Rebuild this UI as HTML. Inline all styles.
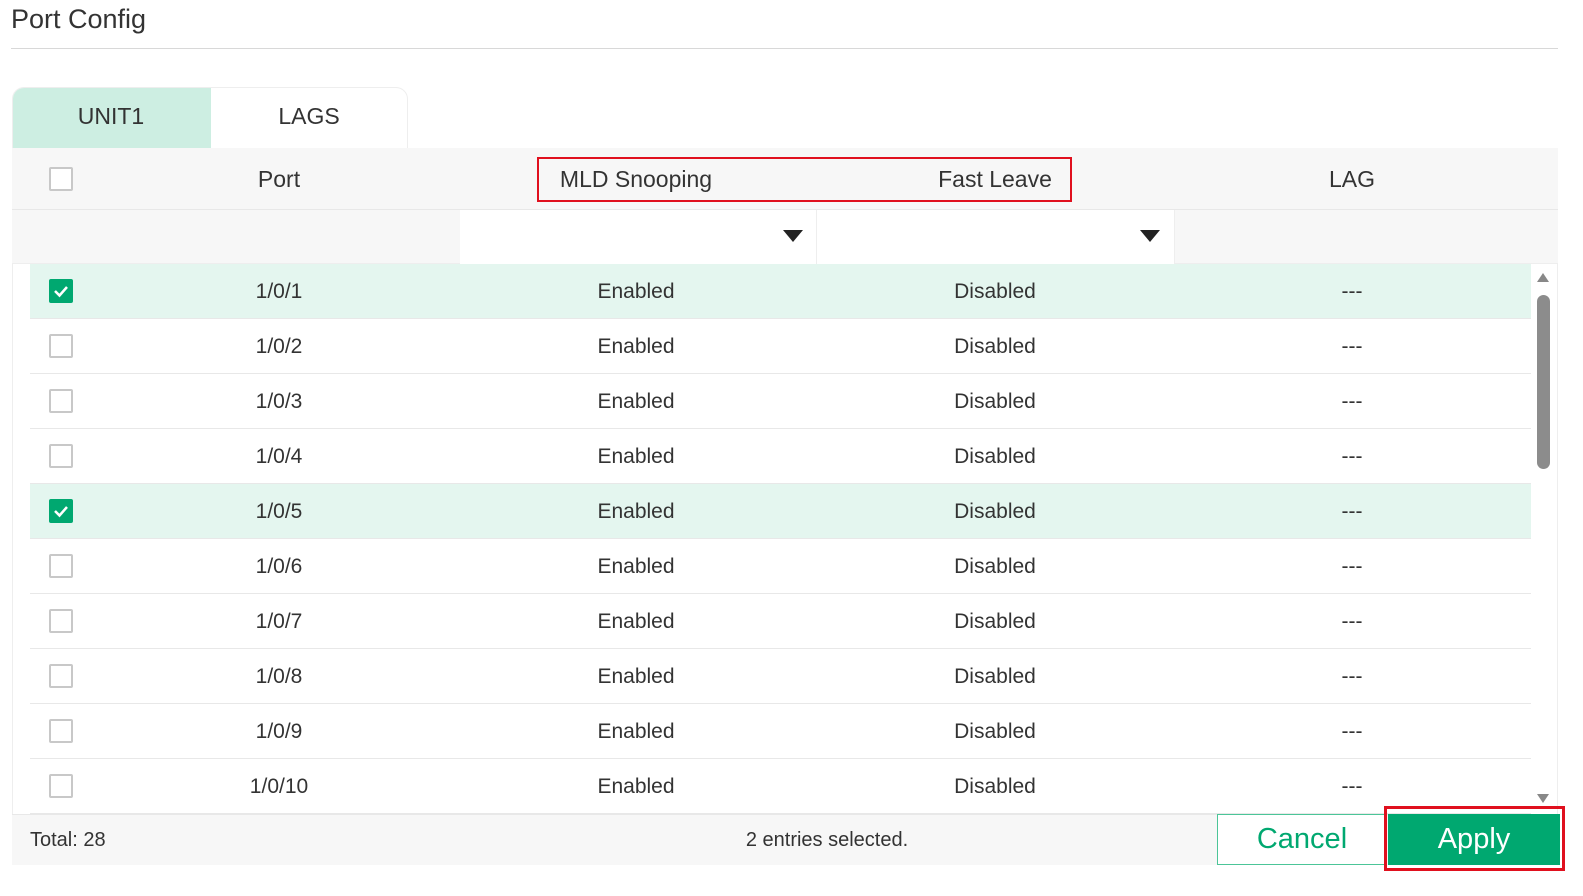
<!DOCTYPE html>
<html><head><style>
*{box-sizing:border-box;margin:0;padding:0}
body{width:1583px;height:896px;background:#fff;font-family:"Liberation Sans",sans-serif;color:#333;position:relative;overflow:hidden}
.a{position:absolute}
.t{position:absolute;transform:translateX(-50%);white-space:nowrap;font-size:21px;color:#333}
.cb{position:absolute;left:49px;width:24px;height:24px;border:2px solid #c8c8c8;background:#fff;border-radius:2px}
.cb.on{background:#00a870;border-color:#00a870}
.row{position:absolute;left:30px;width:1501px;height:55px;border-bottom:1px solid #e8e8e8}
</style></head><body>
<div class="a" style="left:11px;top:4px;font-size:27px;color:#333">Port Config</div>
<div class="a" style="left:11px;top:48px;width:1547px;height:1px;background:#d8d8d8"></div>
<div class="a" style="left:12px;top:87px;width:396px;height:61px;border:1px solid #eee;border-bottom:none;border-radius:12px 12px 0 0;background:#fff;overflow:hidden">
<div class="a" style="left:0;top:0;width:198px;height:61px;background:#cdeee2"></div></div>
<div class="t" style="left:111px;top:103px;font-size:23px">UNIT1</div>
<div class="t" style="left:309px;top:103px;font-size:23px">LAGS</div>
<div class="a" style="left:12px;top:148px;width:1546px;height:717px;border:1px solid #eee;background:#fff"></div>
<div class="a" style="left:12px;top:148px;width:1546px;height:116px;background:#f7f7f7;border-bottom:1px solid #eee"></div>
<div class="a" style="left:12px;top:209px;width:1546px;height:1px;background:#e8e8e8"></div>
<div class="a" style="left:460px;top:210px;width:357px;height:54px;background:#fff;border-right:1px solid #eee"></div>
<div class="a" style="left:817px;top:210px;width:358px;height:54px;background:#fff;border-right:1px solid #eee"></div>
<svg class="a" style="left:783px;top:230px" width="20" height="12"><path d="M0 0H20L10 12Z" fill="#222"/></svg>
<svg class="a" style="left:1140px;top:230px" width="20" height="12"><path d="M0 0H20L10 12Z" fill="#222"/></svg>
<div class="cb" style="top:167px"></div>
<div class="t" style="left:279px;top:166px;font-size:23px">Port</div>
<div class="t" style="left:636px;top:166px;font-size:23px">MLD Snooping</div>
<div class="t" style="left:995px;top:166px;font-size:23px">Fast Leave</div>
<div class="t" style="left:1352px;top:166px;font-size:23px">LAG</div>
<div class="a" style="left:537px;top:157px;width:535px;height:45px;border:2px solid #e0101e"></div>

<div class="row" style="top:264px;background:#e4f6ef"></div>
<div class="row" style="top:319px"></div>
<div class="row" style="top:374px"></div>
<div class="row" style="top:429px"></div>
<div class="row" style="top:484px;background:#e4f6ef"></div>
<div class="row" style="top:539px"></div>
<div class="row" style="top:594px"></div>
<div class="row" style="top:649px"></div>
<div class="row" style="top:704px"></div>
<div class="row" style="top:759px"></div>

<div class="cb on" style="top:279px"><svg width="20" height="20"><path d="M4 10L8.5 14.5L16 6" stroke="#fff" stroke-width="2.5" fill="none"/></svg></div>
<div class="cb" style="top:334px"></div><div class="cb" style="top:389px"></div><div class="cb" style="top:444px"></div>
<div class="cb on" style="top:499px"><svg width="20" height="20"><path d="M4 10L8.5 14.5L16 6" stroke="#fff" stroke-width="2.5" fill="none"/></svg></div>
<div class="cb" style="top:554px"></div><div class="cb" style="top:609px"></div><div class="cb" style="top:664px"></div><div class="cb" style="top:719px"></div><div class="cb" style="top:774px"></div>

<div class="t" style="left:279px;top:280px">1/0/1</div><div class="t" style="left:636px;top:280px">Enabled</div><div class="t" style="left:995px;top:280px">Disabled</div><div class="t" style="left:1352px;top:280px">---</div>
<div class="t" style="left:279px;top:335px">1/0/2</div><div class="t" style="left:636px;top:335px">Enabled</div><div class="t" style="left:995px;top:335px">Disabled</div><div class="t" style="left:1352px;top:335px">---</div>
<div class="t" style="left:279px;top:390px">1/0/3</div><div class="t" style="left:636px;top:390px">Enabled</div><div class="t" style="left:995px;top:390px">Disabled</div><div class="t" style="left:1352px;top:390px">---</div>
<div class="t" style="left:279px;top:445px">1/0/4</div><div class="t" style="left:636px;top:445px">Enabled</div><div class="t" style="left:995px;top:445px">Disabled</div><div class="t" style="left:1352px;top:445px">---</div>
<div class="t" style="left:279px;top:500px">1/0/5</div><div class="t" style="left:636px;top:500px">Enabled</div><div class="t" style="left:995px;top:500px">Disabled</div><div class="t" style="left:1352px;top:500px">---</div>
<div class="t" style="left:279px;top:555px">1/0/6</div><div class="t" style="left:636px;top:555px">Enabled</div><div class="t" style="left:995px;top:555px">Disabled</div><div class="t" style="left:1352px;top:555px">---</div>
<div class="t" style="left:279px;top:610px">1/0/7</div><div class="t" style="left:636px;top:610px">Enabled</div><div class="t" style="left:995px;top:610px">Disabled</div><div class="t" style="left:1352px;top:610px">---</div>
<div class="t" style="left:279px;top:665px">1/0/8</div><div class="t" style="left:636px;top:665px">Enabled</div><div class="t" style="left:995px;top:665px">Disabled</div><div class="t" style="left:1352px;top:665px">---</div>
<div class="t" style="left:279px;top:720px">1/0/9</div><div class="t" style="left:636px;top:720px">Enabled</div><div class="t" style="left:995px;top:720px">Disabled</div><div class="t" style="left:1352px;top:720px">---</div>
<div class="t" style="left:279px;top:775px">1/0/10</div><div class="t" style="left:636px;top:775px">Enabled</div><div class="t" style="left:995px;top:775px">Disabled</div><div class="t" style="left:1352px;top:775px">---</div>

<svg class="a" style="left:1537px;top:273px" width="12" height="9"><path d="M0 9H12L6 0Z" fill="#888"/></svg>
<div class="a" style="left:1537px;top:295px;width:13px;height:174px;background:#8c8c8c;border-radius:7px"></div>
<svg class="a" style="left:1537px;top:794px" width="12" height="9"><path d="M0 0H12L6 9Z" fill="#888"/></svg>

<div class="a" style="left:12px;top:814px;width:1546px;height:51px;background:#f7f7f7;border-top:1px solid #e8e8e8"></div>
<div class="a" style="left:30px;top:829px;font-size:20px">Total: 28</div>
<div class="t" style="left:827px;top:829px;font-size:20px">2 entries selected.</div>
<div class="a" style="left:1217px;top:814px;width:170px;height:51px;border:1px solid #4cc598;background:#fff;color:#00a870;font-size:29px;text-align:center;line-height:49px">Cancel</div>
<div class="a" style="left:1388px;top:814px;width:172px;height:51px;background:#00a870;color:#fff;font-size:29px;text-align:center;line-height:51px">Apply</div>
<div class="a" style="left:1384px;top:806px;width:181px;height:65px;border:3px solid #e0101e"></div>
</body></html>
